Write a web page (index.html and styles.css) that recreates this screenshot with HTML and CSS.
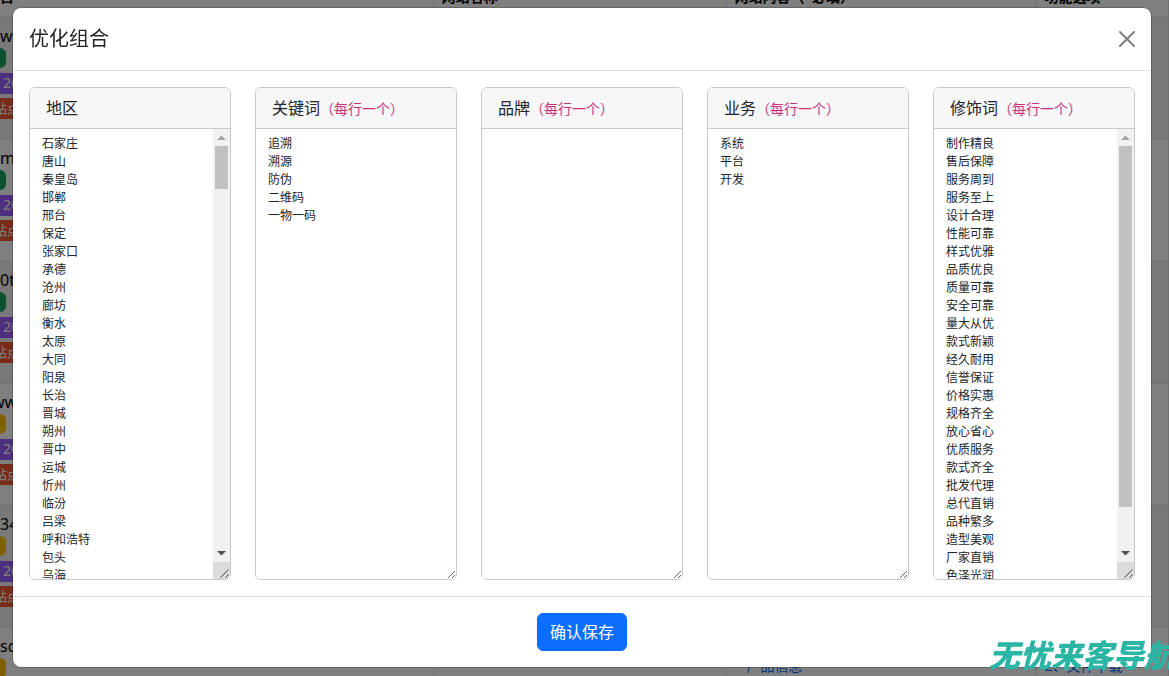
FILE: index.html
```html
<!DOCTYPE html>
<html lang="zh-CN">
<head>
<meta charset="utf-8">
<title>优化组合</title>
<link rel="stylesheet" href="styles.css">
</head>
<body>
<table class="sites" aria-hidden="true">
  <thead>
    <tr><th class="col-site">目</th><th class="col-name">网站名称</th><th class="col-content">网站内容（*必填）</th><th>功能选项</th></tr>
  </thead>
  <tbody>
    <tr><td class="site"><span class="domain">w</span><span class="state ok"></span><span class="date">20</span><span class="point">站点</span></td><td></td><td></td><td></td></tr>
    <tr><td class="site"><span class="domain">m</span><span class="state ok"></span><span class="date">20</span><span class="point">站点</span></td><td></td><td></td><td></td></tr>
    <tr><td class="site"><span class="domain">0t</span><span class="state ok"></span><span class="date">20</span><span class="point">站点</span></td><td></td><td></td><td></td></tr>
    <tr><td class="site"><span class="domain cut">ww</span><span class="state wait"></span><span class="date">20</span><span class="point">站点</span></td><td></td><td></td><td></td></tr>
    <tr><td class="site"><span class="domain">34</span><span class="state wait"></span><span class="date">20</span><span class="point">站点</span></td><td></td><td></td><td></td></tr>
    <tr><td class="site"><span class="domain">sd</span><span class="state wait"></span></td><td></td><td class="links"><a class="inset" href="#">产品信息</a></td><td class="links"><a href="#">2、文件下载</a></td></tr>
  </tbody>
</table>

<div class="backdrop">
  <form class="modal" role="dialog" aria-labelledby="modal-title">
    <header class="modal-header">
      <h5 class="modal-title" id="modal-title">优化组合</h5>
      <button class="close" type="button" aria-label="关闭">
        <svg viewBox="0 0 16 16" width="16" height="16" fill="none" stroke="#000" stroke-width="2" stroke-linecap="round"><path d="M1 1l14 14M15 1L1 15"/></svg>
      </button>
    </header>
    <div class="modal-body">
      <div class="card">
        <label class="card-header" for="area">地区</label>
        <div class="field">
          <textarea class="list fixed" id="area">石家庄
唐山
秦皇岛
邯郸
邢台
保定
张家口
承德
沧州
廊坊
衡水
太原
大同
阳泉
长治
晋城
朔州
晋中
运城
忻州
临汾
吕梁
呼和浩特
包头
乌海
赤峰
通辽</textarea>
          <div class="scrollbar" aria-hidden="true">
            <svg class="arrow" viewBox="0 0 17 17"><path d="M4 11l4.500-4.500L13 11z" fill="#a3a3a3"/></svg>
            <div class="track"><div class="thumb short"></div></div>
            <svg class="arrow" viewBox="0 0 17 17"><path d="M4 6h9l-4.500 4.500z" fill="#505050"/></svg>
            <svg class="grip" viewBox="0 0 17 17"><path d="M7.500 15.500l8-8M12.500 15.500l3-3" fill="none" stroke="#444"/></svg>
          </div>
        </div>
      </div>
      <div class="card">
        <label class="card-header" for="keyword">关键词<code>（每行一个）</code></label>
        <textarea class="list" id="keyword">追溯
溯源
防伪
二维码
一物一码</textarea>
      </div>
      <div class="card">
        <label class="card-header" for="brand">品牌<code>（每行一个）</code></label>
        <textarea class="list" id="brand"></textarea>
      </div>
      <div class="card">
        <label class="card-header" for="business">业务<code>（每行一个）</code></label>
        <textarea class="list" id="business">系统
平台
开发</textarea>
      </div>
      <div class="card">
        <label class="card-header" for="modifier">修饰词<code>（每行一个）</code></label>
        <div class="field">
          <textarea class="list fixed" id="modifier">制作精良
售后保障
服务周到
服务至上
设计合理
性能可靠
样式优雅
品质优良
质量可靠
安全可靠
量大从优
款式新颖
经久耐用
信誉保证
价格实惠
规格齐全
放心省心
优质服务
款式齐全
批发代理
总代直销
品种繁多
造型美观
厂家直销
色泽光润
品质保证
做工精细</textarea>
          <div class="scrollbar" aria-hidden="true">
            <svg class="arrow" viewBox="0 0 17 17"><path d="M4 11l4.500-4.500L13 11z" fill="#a3a3a3"/></svg>
            <div class="track"><div class="thumb long"></div></div>
            <svg class="arrow" viewBox="0 0 17 17"><path d="M4 6h9l-4.500 4.500z" fill="#505050"/></svg>
            <svg class="grip" viewBox="0 0 17 17"><path d="M7.500 15.500l8-8M12.500 15.500l3-3" fill="none" stroke="#444"/></svg>
          </div>
        </div>
      </div>
    </div>
    <footer class="modal-footer">
      <button class="save" type="submit">确认保存</button>
    </footer>
  </form>
</div>
<div class="watermark">无忧来客导航</div>
</body>
</html>
```
FILE: styles.css
```css
* { box-sizing: border-box; }

body {
  margin: 0;
  height: 100vh;
  overflow: hidden;
  background: #fff;
  color: #212529;
  font: 16px/24px "Noto Sans", "Noto Sans CJK SC", sans-serif;
}

/* Site table behind the dialog */
.sites {
  width: 100%;
  margin-top: -24px;
  border-collapse: collapse;
  table-layout: fixed;
}
.sites th {
  padding: 8px;
  text-align: left;
  font-size: 14px;
  font-weight: 700;
  color: #000;
}
.sites th, .sites td { border: 1px solid #dee2e6; border-left: 0; }
.sites .col-site { width: 433px; padding-left: 0; }
.col-name { width: 293px; }
.col-content { width: 310px; }
.sites td { height: 122px; padding: 6px 8px; vertical-align: top; }
.sites tbody tr:nth-child(odd) { background: #f2f2f2; }
.sites .site { padding-left: 0; }
.site span { display: block; }
.domain { color: #000; }
.cut { margin-left: -8px; }
.site .state { width: 6px; height: 20px; border-radius: 0 6px 6px 0; }
.ok { background: #18a562; }
.wait { background: #ffc107; }
.site .date, .site .point {
  width: 60px;
  height: 21px;
  margin-top: 5px;
  color: #fff;
  font-size: 14px;
  line-height: 20px;
}
.site .date { padding-left: 3px; background: #9a5cff; }
.site .point { margin-top: 4px; margin-left: -10px; padding-left: 4px; background: #f0562d; font-size: 13px; }
.sites .links { padding-top: 26px; font-size: 14px; }
.links a { color: #0d6efd; text-decoration: none; }
.links .inset { padding-left: 12px; }

/* Dialog */
.backdrop {
  position: fixed;
  inset: 0;
  padding: 8px 18px 8px 13px;
  background: rgba(0, 0, 0, .5);
}
.modal {
  background: #fff;
  border-radius: 8px;
  box-shadow: 0 0 0 1px rgba(0, 0, 0, .2);
}
.modal-header {
  display: flex;
  align-items: center;
  justify-content: space-between;
  padding: 16px;
  border-bottom: 1px solid #dee2e6;
}
.modal-title { margin: 0; font-size: 20px; line-height: 30px; font-weight: 400; }
.close {
  display: flex;
  padding: 0;
  border: 0;
  background: none;
  opacity: .5;
}
.modal-body {
  display: flex;
  gap: 24px;
  padding: 16px;
}
.card {
  flex: 1;
  min-width: 0;
  display: flex;
  flex-direction: column;
  border: 1px solid #c8c9ca;
  border-radius: 6px;
  overflow: hidden;
}
.card-header {
  padding: 8px 16px;
  background: #f7f7f7;
  border-bottom: 1px solid #c8c9ca;
}
.card-header code {
  color: #c8327d;
  font: 14px "Noto Sans CJK SC", monospace;
}
.field { display: flex; }
.list {
  display: block;
  width: 100%;
  height: 450px;
  padding: 5px 12px;
  border: 0;
  outline: 0;
  resize: both;
  background: #fff;
  color: #212529;
  font: 12px/18px "Noto Sans CJK SC", sans-serif;
}
.fixed { flex: 1; min-width: 0; resize: none; }

.scrollbar {
  display: flex;
  flex-direction: column;
  width: 17px;
  background: #f1f1f1;
}
.arrow, .grip { display: block; width: 17px; height: 17px; }
.grip { background: #dcdcdc; }
.track { flex: 1; padding: 0 2px; }
.thumb { background: #c1c1c1; }
.short { height: 43px; }
.long { height: 361px; }

.modal-footer {
  display: flex;
  justify-content: center;
  padding: 16px;
  border-top: 1px solid #dee2e6;
}
.save {
  padding: 6px 12px;
  border: 1px solid #0d6efd;
  border-radius: 6px;
  background: #0d6efd;
  color: #fff;
  font: inherit;
}

.watermark {
  position: fixed;
  left: 989px;
  bottom: 0;
  white-space: nowrap;
  color: #2ab5a5;
  font: italic 900 31px/44px "Noto Sans CJK SC", sans-serif;
}
```
